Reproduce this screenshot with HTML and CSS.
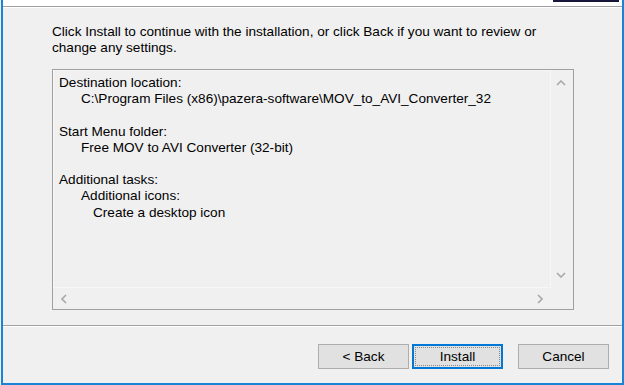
FILE: index.html
```html
<!DOCTYPE html>
<html lang="en">
<head>
    <meta charset="UTF-8">
    <title>Setup - Ready to Install</title>
    <link rel="stylesheet" href="styles.css">
</head>
<body>
    <div class="window">
        <div class="header">
            <div class="banner-edge"></div>
        </div>

        <div class="content">
            <p class="intro">Click Install to continue with the installation, or click Back if you want to review or<br>change any settings.</p>

            <div class="memo">
                <div class="memo-text">
                    <div class="line">Destination location:</div>
                    <div class="line ind1">C:\Program Files (x86)\pazera-software\MOV_to_AVI_Converter_32</div>
                    <div class="line"></div>
                    <div class="line">Start Menu folder:</div>
                    <div class="line ind1">Free MOV to AVI Converter (32-bit)</div>
                    <div class="line"></div>
                    <div class="line">Additional tasks:</div>
                    <div class="line ind1">Additional icons:</div>
                    <div class="line ind2">Create a desktop icon</div>
                </div>
                <div class="vscroll">
                    <span class="arrow">
                        <svg width="10" height="6" viewBox="0 0 10 6"><polyline points="1,5 5,1 9,5" /></svg>
                    </span>
                    <span class="arrow">
                        <svg width="10" height="6" viewBox="0 0 10 6"><polyline points="1,1 5,5 9,1" /></svg>
                    </span>
                </div>
                <div class="hscroll">
                    <span class="arrow">
                        <svg width="6" height="10" viewBox="0 0 6 10"><polyline points="5,1 1,5 5,9" /></svg>
                    </span>
                    <span class="arrow">
                        <svg width="6" height="10" viewBox="0 0 6 10"><polyline points="1,1 5,5 1,9" /></svg>
                    </span>
                </div>
                <div class="corner"></div>
            </div>
        </div>

        <div class="footer">
            <button class="btn">&lt; Back</button>
            <button class="btn default"><span class="focus">Install</span></button>
            <button class="btn cancel">Cancel</button>
        </div>
    </div>
</body>
</html>
```

FILE: styles.css
```css
html, body {
    margin: 0;
    padding: 0;
}

body {
    width: 624px;
    height: 385px;
    overflow: hidden;
    background: #f0f0f0;
    font-family: 'Liberation Sans', Arial, sans-serif;
    font-size: 13.6px;
    color: #000;
}

.window {
    box-sizing: border-box;
    width: 623px;
    height: 385px;
    margin-left: 1px;
    border: 2px solid #1883d7;
    border-top: none;
    display: flex;
    flex-direction: column;
    background: #f0f0f0;
}

.header {
    height: 6px;
    background: #fff;
    border-bottom: 1px solid #a0a0a0;
    display: flex;
    justify-content: flex-end;
}

.banner-edge {
    width: 66px;
    height: 2px;
    margin-right: 3px;
    background: #15163a;
}

.content {
    border-top: 1px solid #fff;
    padding: 16px 0 0 49px;
}

.intro {
    margin: 0 0 13px 0;
    line-height: 16px;
    white-space: nowrap;
}

.memo {
    width: 522px;
    height: 241px;
    box-sizing: border-box;
    border: 1px solid #a0a0a0;
    display: grid;
    grid-template-columns: 1fr 22px;
    grid-template-rows: 1fr 21px;
}

.memo-text {
    border: 1px dotted #fdfdfd;
    padding: 4px 0 0 5px;
    line-height: 16.2px;
    white-space: nowrap;
    overflow: hidden;
}

.line {
    height: 16.2px;
}

.ind1 {
    padding-left: 22px;
}

.ind2 {
    padding-left: 34px;
}

.vscroll {
    display: flex;
    flex-direction: column;
    justify-content: space-between;
}

.vscroll .arrow {
    height: 26px;
    display: flex;
    align-items: center;
    justify-content: center;
    padding-right: 3px;
}

.hscroll {
    display: flex;
    justify-content: space-between;
}

.hscroll .arrow {
    width: 22px;
    display: flex;
    align-items: center;
    justify-content: center;
}

.arrow polyline {
    fill: none;
    stroke: #a8a8a8;
    stroke-width: 1.6;
}

.footer {
    flex: 1;
    margin-top: 15px;
    border-top: 1px solid #a0a0a0;
    box-shadow: inset 0 1px 0 #fff;
    padding: 18px 13px 0 0;
    display: flex;
    justify-content: flex-end;
    align-items: flex-start;
    gap: 3px;
}

.btn {
    box-sizing: border-box;
    width: 91px;
    height: 25px;
    padding: 0;
    background: #e1e1e1;
    border: 1px solid #adadad;
    font: inherit;
    color: #000;
    display: flex;
    align-items: center;
    justify-content: center;
}

.btn.default {
    border: 2px solid #0078d7;
    padding: 1px;
}

.focus {
    box-sizing: border-box;
    width: 100%;
    height: 100%;
    border: 1px dotted #8a8a8a;
    display: flex;
    align-items: center;
    justify-content: center;
}

.btn.cancel {
    margin-left: 12px;
}
```
